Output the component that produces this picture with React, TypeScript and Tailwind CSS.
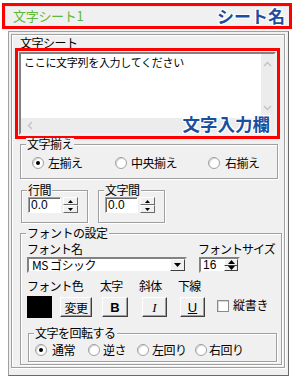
import React from "react";

function Radio({ checked }: { checked?: boolean }) {
  return (
    <span className="w-[12px] h-[12px] rounded-full border border-[#a0a0a0] bg-white shrink-0 flex items-center justify-center shadow-[inset_1px_1px_0_#d4d4d4]">
      {checked && <span className="w-[4px] h-[4px] rounded-full bg-black" />}
    </span>
  );
}

function Group({
  label,
  className,
  children,
}: {
  label: string;
  className: string;
  children?: React.ReactNode;
}) {
  return (
    <div
      className={
        "relative border border-[#a0a0a0] shadow-[1px_1px_0_#ffffff,inset_1px_1px_0_#ffffff] " +
        className
      }
    >
      <span className="absolute -top-[7px] left-[5px] bg-[#f0f0f0] px-[1px] text-[12px] leading-[12px] tracking-[-0.5px]">
        {label}
      </span>
      {children}
    </div>
  );
}

function SmallSpin() {
  return (
    <div className="flex flex-col w-[15px] h-[16px] gap-0">
      <div className="flex-1 bg-[#f0f0f0] border border-t-white border-l-white border-b-[#696969] border-r-[#696969] flex items-center justify-center">
        <svg width="5" height="3" viewBox="0 0 5 3">
          <polygon points="2.5,0 5,3 0,3" fill="#000" />
        </svg>
      </div>
      <div className="flex-1 bg-[#f0f0f0] border border-t-white border-l-white border-b-[#696969] border-r-[#696969] flex items-center justify-center">
        <svg width="5" height="3" viewBox="0 0 5 3">
          <polygon points="0,0 5,0 2.5,3" fill="#000" />
        </svg>
      </div>
    </div>
  );
}

function NumBox() {
  return (
    <div className="flex items-center gap-[2px] ml-[6px] mt-[6px]">
      <div className="w-[33px] h-[16px] bg-white border border-t-[#a0a0a0] border-l-[#a0a0a0] border-b-white border-r-white shadow-[inset_1px_1px_0_#696969] pl-[2px] text-[12px] leading-[14px] font-['Liberation_Sans_Narrow','Liberation_Sans',sans-serif]">
        0.0
      </div>
      <SmallSpin />
    </div>
  );
}

function Btn({ className, children }: { className: string; children: React.ReactNode }) {
  return (
    <div
      className={
        "h-[20px] bg-[#f0f0f0] border border-t-white border-l-white border-b-[#404040] border-r-[#404040] shadow-[inset_-1px_-1px_0_#a0a0a0] flex items-center justify-center text-[12px] leading-[13px] " +
        className
      }
    >
      {children}
    </div>
  );
}

export default function App() {
  return (
    <div className="w-[295px] h-[378px] bg-white overflow-hidden text-black font-['Noto_Sans_CJK_JP','Noto_Sans',sans-serif]">
      {/* sheet name */}
      <div className="ml-[2px] mt-[3px] w-[290px] h-[26px] border-[3px] border-[#ff0000] bg-[#f0f0f0] flex items-center justify-between pl-[8px] pr-[4px] shadow-[inset_1px_1px_0_#e2e2e2]">
        <span className="text-[#5cba3a] text-[13px] leading-[14px] tracking-[-0.3px]">文字シート1</span>
        <span className="font-bold text-[17px] leading-[18px] text-[#1a4f9e] [text-shadow:-1px_-1px_0_#fff,1px_-1px_0_#fff,-1px_1px_0_#fff,1px_1px_0_#fff,0_1px_0_#fff,0_-1px_0_#fff,1px_0_0_#fff,-1px_0_0_#fff]">
          シート名
        </span>
      </div>

      {/* outer panel */}
      <div className="ml-[8px] mt-[2px] w-[281px] h-[345px] bg-[#f0f0f0] border border-[#a0a0a0] border-b-[#696969] border-r-[#696969] p-[2px]">
        <div className="w-[274px] h-[334px] border border-[#a0a0a0] shadow-[1px_1px_0_#ffffff,inset_1px_1px_0_#ffffff]">
          <div className="ml-[8px] mt-[2px] h-[11px] text-[12px] leading-[11px] tracking-[-0.5px]">文字シート</div>

          {/* text input */}
          <div className="relative ml-[3px] w-[265px] h-[91px] border-[3px] border-[#ff0000]">
            <div className="m-[1px] h-[83px] bg-white border-2 border-t-[#828282] border-l-[#828282] border-b-[#f0f0f0] border-r-[#f0f0f0] flex flex-col">
              <div className="flex flex-1">
                <div className="flex-1 pl-[3px] pt-[2px] text-[11px] leading-[13px] tracking-[-0.3px]">
                  ここに文字列を入力してください
                </div>
                <div className="w-[13px] bg-[#ececec] flex flex-col items-center justify-between py-[7px]">
                  <svg width="9" height="6" viewBox="0 0 9 6">
                    <polyline points="1,5 4.5,1.5 8,5" fill="none" stroke="#c4c4c4" strokeWidth="1.5" />
                  </svg>
                  <svg width="9" height="6" viewBox="0 0 9 6">
                    <polyline points="1,1 4.5,4.5 8,1" fill="none" stroke="#c4c4c4" strokeWidth="1.5" />
                  </svg>
                </div>
              </div>
              <div className="h-[15px] bg-[#ececec] flex items-center pl-[6px]">
                <svg width="6" height="9" viewBox="0 0 6 9">
                  <polyline points="5,1 1.5,4.5 5,8" fill="none" stroke="#c4c4c4" strokeWidth="1.5" />
                </svg>
              </div>
            </div>
            <span className="absolute right-[7px] bottom-[3px] font-bold text-[17.5px] leading-[19px] text-[#1a4f9e] [text-shadow:-1px_-1px_0_#fff,1px_-1px_0_#fff,-1px_1px_0_#fff,1px_1px_0_#fff,0_1px_0_#fff,0_-1px_0_#fff,1px_0_0_#fff,-1px_0_0_#fff]">
              文字入力欄
            </span>
          </div>

          {/* alignment */}
          <Group label="文字揃え" className="ml-[8px] mt-[5px] w-[258px] h-[35px]">
            <div className="flex items-center pt-[11px] pl-[11px] text-[12px] leading-[14px] tracking-[-0.5px]">
              <div className="w-[83px] flex items-center gap-[4px]">
                <Radio checked />
                <span>左揃え</span>
              </div>
              <div className="w-[93px] flex items-center gap-[4px]">
                <Radio />
                <span>中央揃え</span>
              </div>
              <div className="flex items-center gap-[5px]">
                <Radio />
                <span>右揃え</span>
              </div>
            </div>
          </Group>

          {/* spacing */}
          <div className="flex mt-[11px]">
            <Group label="行間" className="ml-[9px] w-[67px] h-[33px]">
              <NumBox />
            </Group>
            <Group label="文字間" className="ml-[10px] w-[67px] h-[33px]">
              <NumBox />
            </Group>
          </div>

          {/* font settings */}
          <Group label="フォントの設定" className="ml-[8px] mt-[10px] w-[262px] h-[132px]">
            <div className="flex mt-[9px] h-[12px] text-[12px] leading-[12px] tracking-[-1px]">
              <span className="ml-[6px] w-[171px]">フォント名</span>
              <span>フォントサイズ</span>
            </div>
            <div className="flex mt-[2px]">
              <div className="ml-[6px] w-[160px] h-[16px] bg-white border-2 border-t-[#828282] border-l-[#828282] border-b-[#f0f0f0] border-r-[#f0f0f0] flex items-center">
                <span className="flex-1 pl-[3px] text-[12px] leading-[12px] tracking-[-0.5px]">MS ゴシック</span>
                <div className="w-[15px] h-[12px] bg-[#f0f0f0] border border-t-white border-l-white border-b-[#404040] border-r-[#404040] flex items-center justify-center">
                  <svg width="7" height="4" viewBox="0 0 7 4">
                    <polygon points="0,0 7,0 3.5,4" fill="#000" />
                  </svg>
                </div>
              </div>
              <div className="ml-[12px] w-[41px] h-[16px] bg-white border-2 border-t-[#828282] border-l-[#828282] border-b-[#f0f0f0] border-r-[#f0f0f0] flex items-center">
                <span className="flex-1 pl-[2px] text-[12px] leading-[12px] font-['Liberation_Sans_Narrow','Liberation_Sans',sans-serif]">16</span>
                <div className="w-[14px] h-[12px] flex flex-col">
                  <div className="flex-1 bg-[#f0f0f0] border-t border-l border-t-white border-l-white border-b border-b-[#404040] border-r border-r-[#404040] flex items-center justify-center">
                    <svg width="7" height="4" viewBox="0 0 7 4">
                      <polygon points="3.5,0 7,4 0,4" fill="#000" />
                    </svg>
                  </div>
                  <div className="flex-1 bg-[#f0f0f0] border-r border-r-[#404040] border-b border-b-[#404040] border-l border-l-white flex items-center justify-center">
                    <svg width="7" height="4" viewBox="0 0 7 4">
                      <polygon points="0,0 7,0 3.5,4" fill="#000" />
                    </svg>
                  </div>
                </div>
              </div>
            </div>

            <div className="flex mt-[6px] h-[13px] text-[12px] leading-[13px] tracking-[-0.8px]">
              <span className="ml-[6px] w-[73px]">フォント色</span>
              <span className="w-[39px]">太字</span>
              <span className="w-[39px]">斜体</span>
              <span>下線</span>
            </div>

            <div className="flex items-start mt-[4px]">
              <div className="ml-[6px] w-[25px] h-[22px] bg-black" />
              <Btn className="ml-[8px] mt-[1px] w-[32px] tracking-[-0.5px]">変更</Btn>
              <Btn className="ml-[10px] mt-[1px] w-[26px] font-bold font-['Liberation_Sans',sans-serif] text-[13px]">B</Btn>
              <Btn className="ml-[14px] mt-[1px] w-[25px] italic font-['Liberation_Serif',serif] text-[13px]">I</Btn>
              <Btn className="ml-[13px] mt-[1px] w-[25px] underline font-['Liberation_Sans',sans-serif] text-[13px]">U</Btn>
              <div className="ml-[12px] mt-[4px] w-[12px] h-[12px] bg-white border border-[#8a8a8a] shadow-[inset_1px_1px_0_#d8d8d8]" />
              <span className="ml-[4px] mt-[2px] text-[12px] leading-[14px] tracking-[-0.3px]">縦書き</span>
            </div>

            <Group label="文字を回転する" className="ml-[7px] mt-[15px] w-[249px] h-[29px]">
              <div className="flex items-center pt-[9px] pl-[6px] text-[12px] leading-[13px] tracking-[-0.5px]">
                <div className="w-[53px] flex items-center gap-[5px]">
                  <Radio checked />
                  <span>通常</span>
                </div>
                <div className="w-[49px] flex items-center gap-[3px]">
                  <Radio />
                  <span>逆さ</span>
                </div>
                <div className="w-[58px] flex items-center gap-[3px]">
                  <Radio />
                  <span>左回り</span>
                </div>
                <div className="flex items-center gap-[2px]">
                  <Radio />
                  <span>右回り</span>
                </div>
              </div>
            </Group>
          </Group>
        </div>
      </div>
    </div>
  );
}
